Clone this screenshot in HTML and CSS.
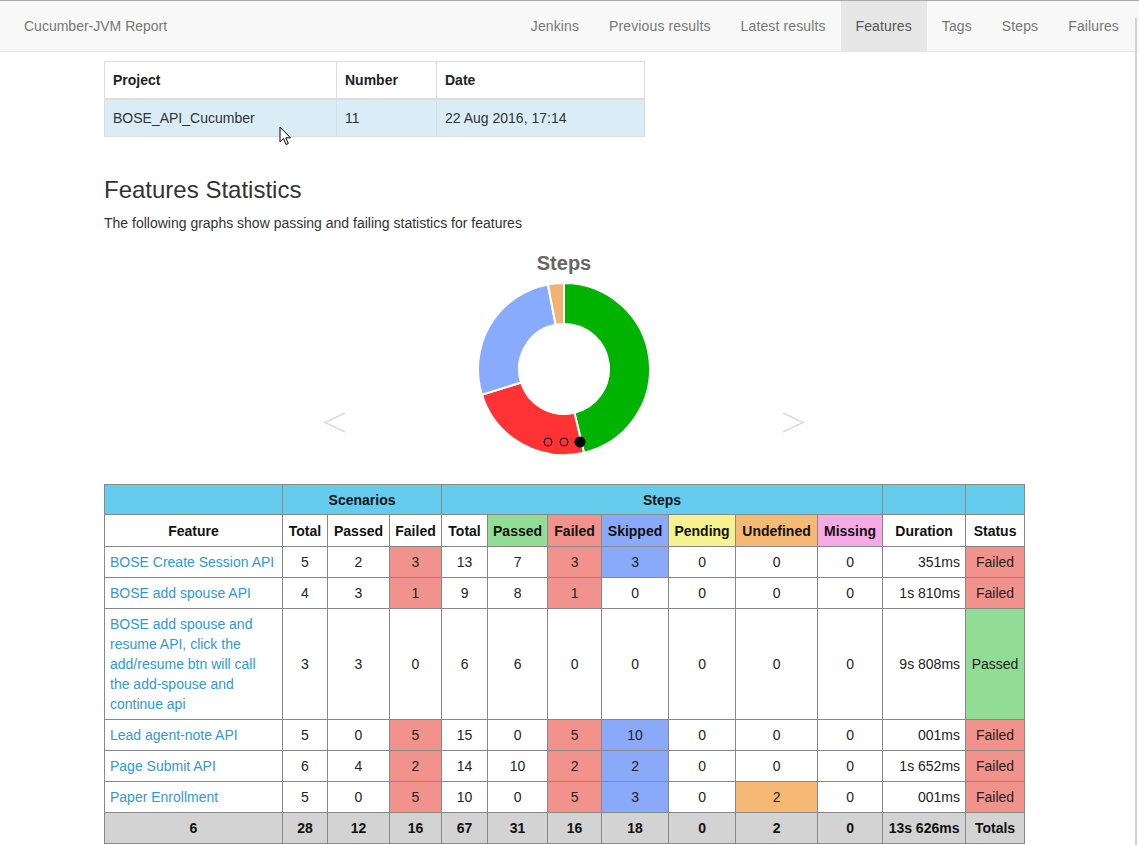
FILE: index.html
```html
<!DOCTYPE html>
<html>
<head>
<meta charset="utf-8">
<title>Cucumber-JVM Report</title>
<link rel="stylesheet" href="styles.css">
</head>
<body>
<div class="scrollbar"></div>
<nav class="navbar">
  <a class="brand">Cucumber-JVM Report</a>
  <ul class="nav">
    <li><a>Jenkins</a></li>
    <li><a>Previous results</a></li>
    <li><a>Latest results</a></li>
    <li class="active"><a>Features</a></li>
    <li><a>Tags</a></li>
    <li><a>Steps</a></li>
    <li><a>Failures</a></li>
  </ul>
</nav>
<main class="main">
  <table class="project">
    <colgroup><col class="c-proj"><col class="c-num"><col class="c-date"></colgroup>
    <thead><tr><th>Project</th><th>Number</th><th>Date</th></tr></thead>
    <tbody><tr><td>BOSE_API_Cucumber</td><td>11</td><td>22 Aug 2016, 17:14</td></tr></tbody>
  </table>
  <div class="cursor"><svg width="14" height="20" viewBox="0 0 14 20"><path d="M1 1 L1 16 L4.5 12.5 L7 18.5 L9.3 17.5 L6.8 11.8 L11.5 11.8 Z" fill="#fff" stroke="#000" stroke-width="1"/></svg></div>

  <h2 class="title">Features Statistics</h2>
  <p class="lead">The following graphs show passing and failing statistics for features</p>

  <section class="chart">
    <div class="chart-title">Steps</div>
    <svg class="donut" width="180" height="180" viewBox="-90 -90 180 180">
      <path d="M0,-86 A86,86 0 0 1 19.98,83.65 L10.45,43.77 A45,45 0 0 0 0,-45 Z" fill="#00b300" stroke="#fff" stroke-width="2"/>
      <path d="M19.98,83.65 A86,86 0 0 1 -82.04,25.80 L-42.93,13.50 A45,45 0 0 0 10.45,43.77 Z" fill="#ff3333" stroke="#fff" stroke-width="2"/>
      <path d="M-82.04,25.80 A86,86 0 0 1 -16.04,-84.49 L-8.39,-44.21 A45,45 0 0 0 -42.93,13.50 Z" fill="#88aaff" stroke="#fff" stroke-width="2"/>
      <path d="M-16.04,-84.49 A86,86 0 0 1 0,-86 L0,-45 A45,45 0 0 0 -8.39,-44.21 Z" fill="#f0b472" stroke="#fff" stroke-width="2"/>
      <circle cx="-16" cy="73" r="4" fill="none" stroke="#000" stroke-width="1"/>
      <circle cx="0" cy="73" r="4" fill="none" stroke="#000" stroke-width="1"/>
      <circle cx="16" cy="73" r="5.5" fill="#000"/>
    </svg>
    <span class="arrow arrow-left"><svg width="24" height="24" viewBox="0 0 24 24"><polyline points="22,2 2,11.5 22,21" fill="none" stroke="#dcdcdc" stroke-width="1.6"/></svg></span>
    <span class="arrow arrow-right"><svg width="24" height="24" viewBox="0 0 24 24"><polyline points="2,2 22,11.5 2,21" fill="none" stroke="#dcdcdc" stroke-width="1.6"/></svg></span>
  </section>

  <table class="stats">
    <colgroup>
      <col style="width:178px"><col style="width:45px"><col style="width:62px"><col style="width:52px">
      <col style="width:46px"><col style="width:60px"><col style="width:54px"><col style="width:67px">
      <col style="width:67px"><col style="width:82px"><col style="width:65px"><col style="width:83px"><col style="width:59px">
    </colgroup>
    <thead>
      <tr class="group">
        <th></th><th colspan="3">Scenarios</th><th colspan="7">Steps</th><th></th><th></th>
      </tr>
      <tr class="head">
        <th>Feature</th><th>Total</th><th>Passed</th><th>Failed</th>
        <th>Total</th><th class="passed">Passed</th><th class="failed">Failed</th><th class="skipped">Skipped</th>
        <th class="pending">Pending</th><th class="undefined">Undefined</th><th class="missing">Missing</th>
        <th>Duration</th><th>Status</th>
      </tr>
    </thead>
    <tbody>
      <tr>
        <td class="name"><a>BOSE Create Session API</a></td><td>5</td><td>2</td><td class="failed">3</td>
        <td>13</td><td>7</td><td class="failed">3</td><td class="skipped">3</td><td>0</td><td>0</td><td>0</td>
        <td class="dur">351ms</td><td class="failed">Failed</td>
      </tr>
      <tr>
        <td class="name"><a>BOSE add spouse API</a></td><td>4</td><td>3</td><td class="failed">1</td>
        <td>9</td><td>8</td><td class="failed">1</td><td>0</td><td>0</td><td>0</td><td>0</td>
        <td class="dur">1s 810ms</td><td class="failed">Failed</td>
      </tr>
      <tr>
        <td class="name"><a>BOSE add spouse and resume API, click the add/resume btn will call the add-spouse and continue api</a></td><td>3</td><td>3</td><td>0</td>
        <td>6</td><td>6</td><td>0</td><td>0</td><td>0</td><td>0</td><td>0</td>
        <td class="dur">9s 808ms</td><td class="passed">Passed</td>
      </tr>
      <tr>
        <td class="name"><a>Lead agent-note API</a></td><td>5</td><td>0</td><td class="failed">5</td>
        <td>15</td><td>0</td><td class="failed">5</td><td class="skipped">10</td><td>0</td><td>0</td><td>0</td>
        <td class="dur">001ms</td><td class="failed">Failed</td>
      </tr>
      <tr>
        <td class="name"><a>Page Submit API</a></td><td>6</td><td>4</td><td class="failed">2</td>
        <td>14</td><td>10</td><td class="failed">2</td><td class="skipped">2</td><td>0</td><td>0</td><td>0</td>
        <td class="dur">1s 652ms</td><td class="failed">Failed</td>
      </tr>
      <tr>
        <td class="name"><a>Paper Enrollment</a></td><td>5</td><td>0</td><td class="failed">5</td>
        <td>10</td><td>0</td><td class="failed">5</td><td class="skipped">3</td><td>0</td><td class="undefined">2</td><td>0</td>
        <td class="dur">001ms</td><td class="failed">Failed</td>
      </tr>
    </tbody>
    <tfoot>
      <tr class="totals">
        <td>6</td><td>28</td><td>12</td><td>16</td><td>67</td><td>31</td><td>16</td><td>18</td><td>0</td><td>2</td><td>0</td><td>13s 626ms</td><td>Totals</td>
      </tr>
    </tfoot>
  </table>
</main>
</body>
</html>
```
FILE: styles.css
```css
html, body {
  margin: 0;
  padding: 0;
}
body {
  font-family: "Liberation Sans", Arial, Helvetica, sans-serif;
  font-size: 14px;
  line-height: 20px;
  color: #333;
  background: #fff;
  border-top: 1px solid #a9a9a9;
}
.scrollbar {
  position: fixed;
  right: 2px;
  top: 18px;
  bottom: 0;
  width: 2px;
  background: #d2d2d2;
}
.navbar {
  display: flex;
  align-items: stretch;
  height: 50px;
  background: #f8f8f8;
  border-bottom: 1px solid #e7e7e7;
  padding-left: 24px;
  padding-right: 5px;
}
.brand {
  line-height: 50px;
  color: #777;
  font-size: 14px;
}
.nav {
  display: flex;
  list-style: none;
  margin: 0 0 0 auto;
  padding: 0;
}
.nav li a {
  display: block;
  padding: 0 15px;
  line-height: 50px;
  color: #777;
  letter-spacing: 0.12px;
}
.nav li.active a {
  background: #e7e7e7;
  color: #555;
}
.main {
  position: relative;
  width: 920px;
  margin-left: 104px;
}
.project {
  margin-top: 9px;
  width: 540px;
  border-collapse: collapse;
  table-layout: fixed;
  border: 1px solid #ddd;
}
.c-proj { width: 232px; }
.c-num { width: 100px; }
.c-date { width: 208px; }
.project th, .project td {
  padding: 8px;
  text-align: left;
  border: 1px solid #ddd;
  line-height: 20px;
}
.project th {
  border-bottom: 2px solid #ddd;
  color: #222;
}
.project tbody tr {
  background: #d9edf7;
}
.cursor {
  position: absolute;
  left: 175px;
  top: 65px;
  width: 14px;
  height: 20px;
}
.title {
  margin: 40px 0 0;
  font-size: 24px;
  font-weight: normal;
  line-height: 26px;
  color: #333;
}
.lead {
  margin: 10px 0 0;
  line-height: 20px;
}
.chart {
  position: relative;
  height: 251px;
  text-align: center;
}
.chart-title {
  padding-top: 18px;
  font-size: 20px;
  font-weight: bold;
  line-height: 24px;
  color: #666;
}
.donut {
  display: block;
  margin: 4px auto 0;
}
.arrow {
  position: absolute;
  top: 178px;
  width: 24px;
  height: 24px;
}
.arrow-left { left: 219px; }
.arrow-right { left: 677px; }
.stats {
  width: 920px;
  border-collapse: collapse;
  table-layout: fixed;
  margin-bottom: 2px;
}
.stats th, .stats td {
  border: 1px solid #888;
  padding: 5px 5px;
  line-height: 20px;
  text-align: center;
  vertical-align: middle;
  color: #222;
}
.stats th {
  font-weight: bold;
  color: #111;
  white-space: nowrap;
}
.stats .group th {
  background: #66ccee;
  height: 19px;
  padding: 5px 5px 4px;
}
.stats .head th {
  padding-top: 6px;
}
.stats td.name {
  text-align: left;
}
.stats td.name a {
  color: #3497cf;
}
.stats td.dur {
  text-align: right;
}
.stats .totals td {
  background: #d3d3d3;
  font-weight: bold;
  color: #111;
}
.stats .passed { background: #92dd96; }
.stats .failed { background: #f2928c; }
.stats .skipped { background: #8aaaf9; }
.stats .pending { background: #f5f28f; }
.stats .undefined { background: #f5b975; }
.stats .missing { background: #f5a9e5; }
```
